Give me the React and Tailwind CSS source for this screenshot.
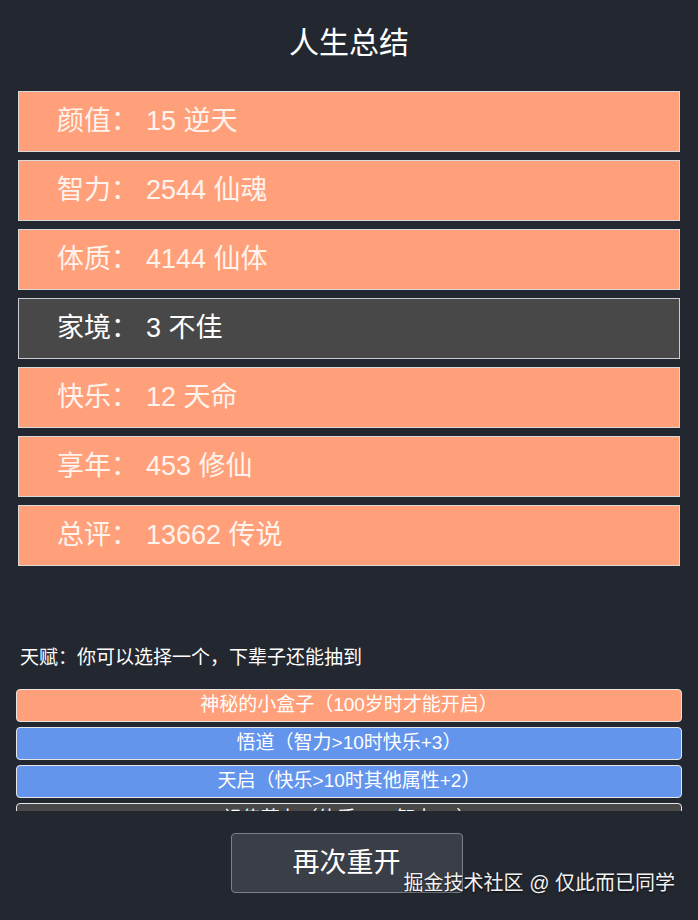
import React from "react";

const stats = [
  { label: "颜值", value: "15 逆天", grade: "high" },
  { label: "智力", value: "2544 仙魂", grade: "high" },
  { label: "体质", value: "4144 仙体", grade: "high" },
  { label: "家境", value: "3 不佳", grade: "low" },
  { label: "快乐", value: "12 天命", grade: "high" },
  { label: "享年", value: "453 修仙", grade: "high" },
  { label: "总评", value: "13662 传说", grade: "high" },
];

const talents = [
  { name: "神秘的小盒子（100岁时才能开启）", color: "orange" },
  { name: "悟道（智力>10时快乐+3）", color: "blue" },
  { name: "天启（快乐>10时其他属性+2）", color: "blue" },
  { name: "祖传药丸（体质+2，智力+1）", color: "gray" },
];

const talentColor = {
  orange: "bg-[#ffa07a]",
  blue: "bg-[#6495ed]",
  gray: "bg-[#484848]",
};

const App = () => {
  return (
    <div
      className="relative w-full h-[920px] bg-[#23272f] text-white overflow-hidden"
      style={{ fontFamily: '"Liberation Sans", "Noto Sans CJK SC", sans-serif' }}
    >
      <h1 className="pt-[23px] h-[91px] text-center text-[30px] leading-[40px]">
        人生总结
      </h1>

      <div className="mx-[18px] flex flex-col gap-[8px]">
        {stats.map((s) => (
          <div
            key={s.label}
            className={`h-[61px] flex items-center pl-[38px] border text-[27px] ${
              s.grade === "low"
                ? "bg-[#484848] text-white border-[#c8ccd2]"
                : "bg-[#ffa07a] text-[#fff3ee] border-[#d9d9d9]"
            }`}
          >
            <span className="w-[89px]">{s.label}：</span>
            <span>{s.value}</span>
          </div>
        ))}
      </div>

      <p className="mt-[80px] ml-[20px] text-[19px] leading-[24px]">
        天赋：你可以选择一个，下辈子还能抽到
      </p>

      <div className="mt-[19px] mx-[16px] h-[122px] overflow-hidden flex flex-col gap-[5px]">
        {talents.map((t) => (
          <div
            key={t.name}
            className={`shrink-0 h-[33px] flex items-center justify-center rounded-[4px] border border-[#e6e6e6] text-[19px] ${talentColor[t.color]}`}
          >
            {t.name}
          </div>
        ))}
      </div>

      <div className="mt-[22px] flex justify-center pr-[5px]">
        <button className="w-[232px] h-[60px] rounded-[4px] border border-[#7b8089] bg-[#3a3e46] text-[27px] text-white">
          再次重开
        </button>
      </div>

      <div className="absolute right-[23px] bottom-[22px] text-[20px] text-[#f2f2f2] [text-shadow:0_1px_2px_rgba(0,0,0,0.7)]">
        掘金技术社区 @ 仅此而已同学
      </div>
    </div>
  );
};

export default App;
